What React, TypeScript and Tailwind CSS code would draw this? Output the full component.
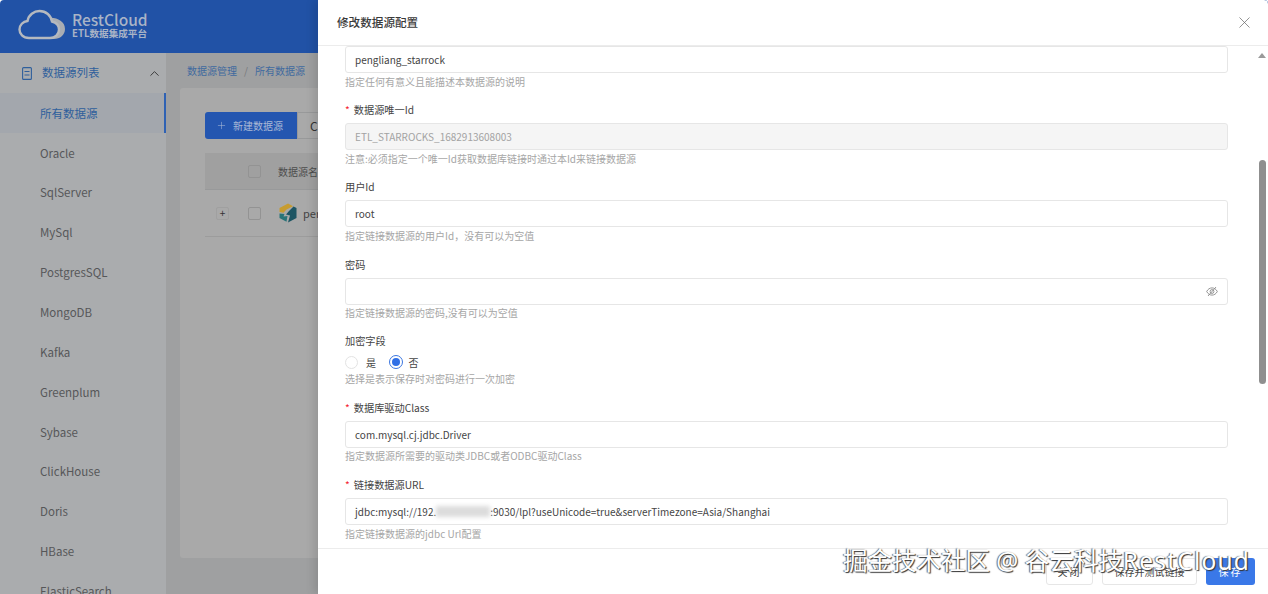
import { ChevronUp, Plus, X } from 'lucide-react'
import type { ReactNode } from 'react'

const FONT = '[font-family:"Noto_Sans_CJK_SC","Noto_Sans",sans-serif]'

const MENU = ['Oracle', 'SqlServer', 'MySql', 'PostgresSQL', 'MongoDB', 'Kafka', 'Greenplum', 'Sybase', 'ClickHouse', 'Doris', 'HBase', 'ElasticSearch']

function CloudLogo() {
  return (
    <svg width="48" height="32" viewBox="0 0 48 32" className="-mt-[3px] shrink-0">
      <path d="M31 9c7-1 16 3 16 11 0 6-5 10-11 10H24c7-2 11-7 11-12 0-3-2-6-4-9z" fill="#a9adb3" />
      <path d="M11 29C5 29 1.500 25 1.500 20.500 1.500 16 5 12.500 9.500 12 10.500 6 16 2 21.500 2 28 2 33 6.500 34 12.500 38 13.500 41 16.500 41 20.500 41 25.500 37 29 32 29z" fill="#2152a6" stroke="#b5b9bf" strokeWidth="2.400" />
    </svg>
  )
}

function StarRocksIcon() {
  return (
    <svg width="20" height="20" viewBox="0 0 20 20" className="shrink-0">
      <path d="M10 0.500 15 3.200 8.500 6.500 5.500 9.800 1.500 9V5z" fill="#c79c30" />
      <path d="M15.500 3.500 18.500 5V15L10 19.500 12 12.500 8 11.500 11 8z" fill="#1d5563" />
      <path d="M1.500 10.500 6.500 11 5.500 13.500 9.500 13 8.500 18.700 1.500 15z" fill="#2a7478" />
    </svg>
  )
}

function EyeHidden() {
  return (
    <svg width="12" height="11" viewBox="0 0 12 11" fill="none" stroke="#8a8a8a" strokeWidth="0.900">
      <path d="M0.700 5.500C2 3 3.800 1.900 6 1.900S10 3 11.300 5.500C10 8 8.200 9.100 6 9.100S2 8 0.700 5.500z" />
      <circle cx="6" cy="5.500" r="1.900" />
      <path d="M2 10 10 1" />
    </svg>
  )
}

function Sidebar() {
  return (
    <aside className="flex w-[166px] shrink-0 flex-col bg-[#aaacae]">
      <div className="flex h-[40px] shrink-0 items-center pl-[22px] pr-[4px] text-[11.500px] text-[#2f5f9c]">
        <svg width="10" height="13" viewBox="0 0 10 13" fill="none" stroke="#2f5f9c" strokeWidth="1.100" className="shrink-0">
          <rect x="0.600" y="0.600" width="8.800" height="11.800" rx="1" />
          <path d="M2.500 4.500h5M2.500 8h5" />
        </svg>
        <span className="ml-[10px] flex-1">数据源列表</span>
        <ChevronUp size={15} strokeWidth={1.500} className="text-[#333]" />
      </div>
      <div className="flex h-[40.300px] shrink-0 items-center border-r-2 border-[#2f62b4] bg-[#a3a7ad] pl-[40px] text-[11.500px] text-[#2f5f9c]">所有数据源</div>
      {MENU.map(name => (
        <div key={name} className="flex h-[39.850px] shrink-0 items-center pl-[40px] text-[11.500px] text-[#565759]">{name}</div>
      ))}
    </aside>
  )
}

function MainArea() {
  return (
    <main className="flex min-w-0 flex-1 flex-col bg-[#9fa0a1] pl-[14px]">
      <div className="flex h-[35px] shrink-0 items-center pl-[7px] text-[10px] text-[#3f6a9f]">
        数据源管理<span className="mx-[7px] text-[#77797c]">/</span>所有数据源
      </div>
      <div className="h-[470px] rounded-l-[3px] bg-[#a9a9a9] pl-[25px] pt-[24px]">
        <div className="flex h-[27px]">
          <div className="flex w-[92px] items-center rounded-l-[3px] bg-[#2456b0] pl-[11px] text-[10px] text-[#a9b9d6]">
            <Plus size={11} strokeWidth={1.200} />
            <span className="ml-[6px]">新建数据源</span>
          </div>
          <div className="flex flex-1 items-center border border-[#98999a] pl-[12px] text-[12px] text-[#333]">C</div>
        </div>
        <div className="mt-[14px] flex h-[37px] items-center border-b border-[#98999a] bg-[#a0a0a0]">
          <div className="ml-[43px] h-[13px] w-[13px] rounded-[2px] border border-[#939393]" />
          <span className="ml-[17px] whitespace-nowrap text-[10px] text-[#4d4d4d]">数据源名</span>
        </div>
        <div className="flex h-[47px] items-center border-b border-[#9c9c9c]">
          <div className="ml-[11px] flex h-[13px] w-[13px] items-center justify-center rounded-[2px] border border-[#a0a0a0] text-[10px] leading-none text-[#333]">+</div>
          <div className="ml-[19px] h-[13px] w-[13px] rounded-[2px] border border-[#939393]" />
          <div className="ml-[17px]"><StarRocksIcon /></div>
          <span className="ml-[5px] text-[11px] text-[#444]">per</span>
        </div>
      </div>
    </main>
  )
}

function Field({ label, required, help, gap = 'mb-[11px]', children }: { label?: string; required?: boolean; help: string; gap?: string; children: ReactNode }) {
  return (
    <div className={gap}>
      {label && (
        <div className="mb-[3px] flex h-[20px] items-center text-[10.200px] text-[#444]">
          {required && <span className="mr-[4px] text-[#f5222d]">*</span>}
          {label}
        </div>
      )}
      {children}
      <div className="flex h-[16px] items-center text-[10px] text-[#a6a6a6]">{help}</div>
    </div>
  )
}

function TextBox({ children, disabled, className = '' }: { children?: ReactNode; disabled?: boolean; className?: string }) {
  return (
    <div className={`flex h-[27px] items-center rounded-[3px] border border-[#e6e6e6] pl-[9px] text-[10px] ${disabled ? 'bg-[#f5f5f5] text-[#a3a3a3]' : 'bg-white text-[#444]'} ${className}`}>
      {children}
    </div>
  )
}

function Drawer() {
  return (
    <section className="absolute inset-y-0 left-[318px] right-0 flex flex-col rounded-tr-[4px] bg-white shadow-[-4px_0_10px_rgba(0,0,0,0.12)]">
      <header className="flex h-[46px] shrink-0 items-center border-b border-[#ececec] pl-[19px] pr-[14px]">
        <h1 className="flex-1 text-[11.600px] font-medium text-[#3a3a3a]">修改数据源配置</h1>
        <X size={19} strokeWidth={0.900} className="text-[#666]" />
      </header>

      <div className="relative min-h-0 flex-1 overflow-hidden pl-[27px] pr-[40px]">
        <Field help="指定任何有意义且能描述本数据源的说明">
          <TextBox>pengliang_starrock</TextBox>
        </Field>
        <Field label="数据源唯一Id" required help="注意:必须指定一个唯一Id获取数据库链接时通过本Id来链接数据源">
          <TextBox disabled>ETL_STARROCKS_1682913608003</TextBox>
        </Field>
        <Field label="用户Id" gap="mb-[11.500px]" help="指定链接数据源的用户Id，没有可以为空值">
          <TextBox>root</TextBox>
        </Field>
        <Field label="密码" gap="mb-[10.500px]" help="指定链接数据源的密码,没有可以为空值">
          <TextBox className="justify-end pr-[9px]">
            <EyeHidden />
          </TextBox>
        </Field>
        <Field label="加密字段" gap="mb-[11.500px]" help="选择是表示保存时对密码进行一次加密">
          <div className="flex h-[16px] items-center text-[10px] text-[#444]">
            <span className="h-[13px] w-[13px] rounded-full border border-[#e3e3e3]" />
            <span className="ml-[8px]">是</span>
            <span className="ml-[12.500px] flex h-[14px] w-[14px] items-center justify-center rounded-full border border-[#3b76e0]">
              <span className="h-[8px] w-[8px] rounded-full bg-[#2f6fe6]" />
            </span>
            <span className="ml-[6px]">否</span>
          </div>
        </Field>
        <Field label="数据库驱动Class" required gap="mb-[11.500px]" help="指定数据源所需要的驱动类JDBC或者ODBC驱动Class">
          <TextBox>com.mysql.cj.jdbc.Driver</TextBox>
        </Field>
        <Field label="链接数据源URL" required help="指定链接数据源的jdbc Url配置">
          <TextBox>
            jdbc:mysql://192.
            <span className="inline-block h-[11px] w-[54px] bg-[#dcdcdc] blur-[2px]" />
            :9030/lpl?useUnicode=true&amp;serverTimezone=Asia/Shanghai
          </TextBox>
        </Field>

        <div className="absolute inset-y-0 right-[2px] flex w-[8px] flex-col items-center">
          <span className="mt-[7px] h-0 w-0 border-x-[4px] border-b-[5px] border-x-transparent border-b-[#9a9a9a]" />
          <span className="mt-[102px] h-[224px] w-[7px] rounded-full bg-[#8f8f8f]" />
        </div>
      </div>

      <footer className="flex h-[46px] shrink-0 items-start justify-end gap-[9px] border-t border-[#ececec] pr-[13px] pt-[9px] text-[10px]">
        <button className="h-[27px] w-[47px] rounded-[3px] border border-[#e6e6e6] bg-white tracking-[2px] text-[#444]">关闭</button>
        <button className="h-[27px] w-[95px] rounded-[3px] border border-[#e6e6e6] bg-white text-[#444]">保存并测试链接</button>
        <button className="h-[27px] w-[49px] rounded-[3px] bg-[#3a78e8] tracking-[2px] text-white">保存</button>
      </footer>
    </section>
  )
}

export default function App() {
  return (
    <div className={`relative flex h-[594px] w-full flex-col overflow-hidden rounded-t-[4px] bg-white ${FONT}`}>
      <div className="flex h-[53px] shrink-0 items-center bg-[#2152a6] pl-[18px]">
        <CloudLogo />
        <div className="-mt-[4px] ml-[6px] flex flex-col">
          <span className="text-[15.500px] font-medium leading-[17px] text-[#a9b4c6]">RestCloud</span>
          <span className="text-[9.600px] font-bold leading-[11px] text-[#a9b4c6]">ETL数据集成平台</span>
        </div>
      </div>
      <div className="flex min-h-0 flex-1">
        <Sidebar />
        <MainArea />
      </div>
      <Drawer />
      <div className='absolute left-[843px] top-[544px] whitespace-nowrap text-[24.500px] leading-[34px] text-white [font-family:"Noto_Sans","Noto_Sans_CJK_SC",sans-serif] [text-shadow:1px_1px_1px_#333,-1px_0_1px_#666]'>
        掘金技术社区 @ 谷云科技<span className="tracking-[1.200px]">RestCloud</span>
      </div>
    </div>
  )
}
